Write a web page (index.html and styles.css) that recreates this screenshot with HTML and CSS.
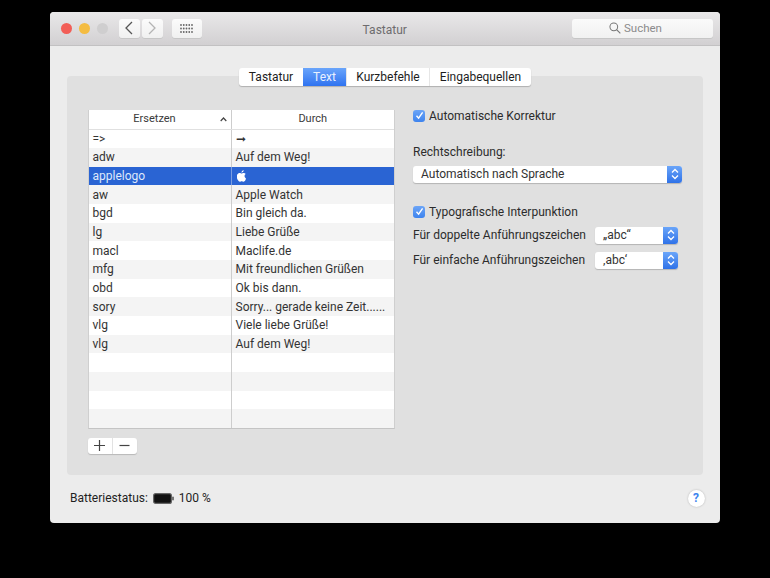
FILE: index.html
```html
<!DOCTYPE html>
<html lang="de">
<head>
<meta charset="utf-8">
<title>Tastatur</title>
<link rel="stylesheet" href="styles.css">
</head>
<body>
<div class="window">
  <header class="titlebar">
    <div class="lights">
      <span class="light red"></span><span class="light yellow"></span><span class="light grey"></span>
    </div>
    <div class="navgroup">
      <button class="tb-btn nav"><svg width="10" height="16" viewBox="0 0 10 16"><path d="M8 2 2 8l6 6" fill="none" stroke="#555" stroke-width="1.3"/></svg></button>
      <button class="tb-btn nav"><svg width="10" height="16" viewBox="0 0 10 16"><path d="M2 2l6 6-6 6" fill="none" stroke="#b4b4b4" stroke-width="1.3"/></svg></button>
    </div>
    <button class="tb-btn grid-btn"><svg width="13" height="9" viewBox="0 0 13 9" fill="#666"><circle cx="1" cy="1" r=".9"/><circle cx="3.75" cy="1" r=".9"/><circle cx="6.5" cy="1" r=".9"/><circle cx="9.25" cy="1" r=".9"/><circle cx="12" cy="1" r=".9"/><circle cx="1" cy="4.5" r=".9"/><circle cx="3.75" cy="4.5" r=".9"/><circle cx="6.5" cy="4.5" r=".9"/><circle cx="9.25" cy="4.5" r=".9"/><circle cx="12" cy="4.5" r=".9"/><circle cx="1" cy="8" r=".9"/><circle cx="3.75" cy="8" r=".9"/><circle cx="6.5" cy="8" r=".9"/><circle cx="9.25" cy="8" r=".9"/><circle cx="12" cy="8" r=".9"/></svg></button>
    <div class="title">Tastatur</div>
    <div class="search"><svg width="12" height="12" viewBox="0 0 13 13"><circle cx="5.2" cy="5.2" r="4.2" fill="none" stroke="#777" stroke-width="1.1"/><path d="M8.2 8.2 12.3 12.3" stroke="#777" stroke-width="1.3"/></svg><span>Suchen</span></div>
  </header>
  <main class="content">
    <section class="panel">
      <nav class="tabs">
        <span class="tab t1">Tastatur</span><span class="tab active t2">Text</span><span class="tab t3">Kurzbefehle</span><span class="tab t4">Eingabequellen</span>
      </nav>
      <div class="panel-body">
        <div class="left">
          <div class="table">
            <div class="thead">
              <div class="th c1"><span class="th-text">Ersetzen</span><svg class="sort" width="7" height="5" viewBox="0 0 7 5"><path d="M.7 4 3.5 1l2.8 3" fill="none" stroke="#444" stroke-width="1.2"/></svg></div>
              <div class="th c2">Durch</div>
            </div>
            <div class="tbody">
              <div class="row"><div class="c1">=&gt;</div><div class="c2">➞</div></div>
              <div class="row alt"><div class="c1">adw</div><div class="c2">Auf dem Weg!</div></div>
              <div class="row sel"><div class="c1">applelogo</div><div class="c2"><svg class="apple" width="10" height="12" viewBox="0 0 170 200"><path fill="#fff" d="M150 156c-3 7-6 13-10 19-5 8-10 13-13 16-5 5-11 7-17 7-4 0-9-1-15-4-6-2-11-4-16-4s-11 1-16 4c-6 3-11 4-14 4-7 0-13-2-18-7-4-3-9-9-14-17-6-9-11-19-15-30-4-13-6-25-6-36 0-13 3-25 9-34 4-8 10-14 17-18s15-6 23-6c5 0 11 1 18 4 7 2 12 4 14 4s7-2 16-5c8-3 15-4 21-3 15 1 27 7 34 18-13 8-20 20-20 34 0 11 4 21 12 28 4 3 8 6 12 8-1 3-2 6-3 8zM114 4c0 9-3 17-10 25-8 9-17 14-28 14 0-1 0-2 0-4 0-8 4-17 10-24 3-4 7-7 12-9 5-3 10-4 14-5 1 1 2 2 2 3z"/></svg></div></div>
              <div class="row alt"><div class="c1">aw</div><div class="c2">Apple Watch</div></div>
              <div class="row"><div class="c1">bgd</div><div class="c2">Bin gleich da.</div></div>
              <div class="row alt"><div class="c1">lg</div><div class="c2">Liebe Grüße</div></div>
              <div class="row"><div class="c1">macl</div><div class="c2">Maclife.de</div></div>
              <div class="row alt"><div class="c1">mfg</div><div class="c2">Mit freundlichen Grüßen</div></div>
              <div class="row"><div class="c1">obd</div><div class="c2">Ok bis dann.</div></div>
              <div class="row alt"><div class="c1">sory</div><div class="c2">Sorry... gerade keine Zeit......</div></div>
              <div class="row"><div class="c1">vlg</div><div class="c2">Viele liebe Grüße!</div></div>
              <div class="row alt"><div class="c1">vlg</div><div class="c2">Auf dem Weg!</div></div>
              <div class="row"><div class="c1"></div><div class="c2"></div></div>
              <div class="row alt"><div class="c1"></div><div class="c2"></div></div>
              <div class="row"><div class="c1"></div><div class="c2"></div></div>
              <div class="row alt"><div class="c1"></div><div class="c2"></div></div>
            </div>
          </div>
          <div class="addremove">
            <button class="ar"><svg width="11" height="11" viewBox="0 0 11 11"><path d="M5.5 0v11M0 5.5h11" stroke="#444" stroke-width="1.2"/></svg></button>
            <button class="ar"><svg width="11" height="11" viewBox="0 0 11 11"><path d="M.5 5.5h10" stroke="#444" stroke-width="1.2"/></svg></button>
          </div>
        </div>
        <div class="right">
          <label class="check first"><span class="box"><svg width="9" height="9" viewBox="0 0 9 9"><path d="M1.5 4.8 3.6 7.2 7.6 1.4" fill="none" stroke="#fff" stroke-width="1.4"/></svg></span>Automatische Korrektur</label>
          <div class="lbl">Rechtschreibung:</div>
          <div class="select wide"><span>Automatisch nach Sprache</span><span class="stepper"><svg width="8" height="12" viewBox="0 0 8 12"><path d="M1 4.5 4 1.5l3 3M1 7.5l3 3 3-3" fill="none" stroke="#fff" stroke-width="1.3"/></svg></span></div>
          <label class="check second"><span class="box"><svg width="9" height="9" viewBox="0 0 9 9"><path d="M1.5 4.8 3.6 7.2 7.6 1.4" fill="none" stroke="#fff" stroke-width="1.4"/></svg></span>Typografische Interpunktion</label>
          <div class="quote q1"><span class="q-label">Für doppelte Anführungszeichen</span><div class="select small"><span>„abc“</span><span class="stepper"><svg width="8" height="12" viewBox="0 0 8 12"><path d="M1 4.5 4 1.5l3 3M1 7.5l3 3 3-3" fill="none" stroke="#fff" stroke-width="1.3"/></svg></span></div></div>
          <div class="quote q2"><span class="q-label">Für einfache Anführungszeichen</span><div class="select small"><span>‚abc‘</span><span class="stepper"><svg width="8" height="12" viewBox="0 0 8 12"><path d="M1 4.5 4 1.5l3 3M1 7.5l3 3 3-3" fill="none" stroke="#fff" stroke-width="1.3"/></svg></span></div></div>
        </div>
      </div>
    </section>
    <footer class="status">
      <span class="status-label">Batteriestatus:</span>
      <svg class="battery" width="21" height="11" viewBox="0 0 21 11"><rect x=".6" y=".6" width="17.8" height="9.8" rx="2" fill="#111" stroke="#666" stroke-width="1.2"/><rect x="19.3" y="3.7" width="1.4" height="3.6" fill="#444"/></svg>
      <span>100 %</span>
      <span class="help">?</span>
    </footer>
  </main>
</div>
</body>
</html>
```
FILE: styles.css
```css
* { box-sizing: border-box; }
html, body { margin: 0; height: 100%; background: #000; overflow: hidden; }
body { padding: 12px 0 0 49.5px; font-family: Roboto, "Liberation Sans", sans-serif; font-size: 12px; color: #2a2a2a; }
button { font: inherit; padding: 0; border: 0; }

.window { width: 670.5px; height: 511px; background: #ececec; border-radius: 4px; overflow: hidden; display: flex; flex-direction: column; }

.titlebar { height: 33.5px; flex: none; display: flex; align-items: center; position: relative; background: linear-gradient(#e9e8e9, #d2d0d2); border-bottom: 1px solid #c2c1c2; }
.lights { display: flex; gap: 7px; margin-left: 11px; }
.light { width: 11px; height: 11px; border-radius: 50%; }
.red { background: #f25e57; }
.yellow { background: #f4bc42; }
.grey { background: #cfcecf; }
.navgroup { display: flex; gap: 2px; margin-left: 11px; }
.tb-btn { height: 19px; background: linear-gradient(#fbfbfb, #f0f0f0); border-radius: 3px; box-shadow: 0 1px 0 #c6c6c6; display: flex; align-items: center; justify-content: center; }
.nav { width: 21px; }
.grid-btn { width: 30px; margin-left: 9px; }
.title { position: absolute; left: 0; right: 0; text-align: center; color: #6e6c6e; font-size: 12px; pointer-events: none; padding-top: 3px; }
.search { margin-left: auto; margin-right: 7px; width: 141px; height: 19px; background: linear-gradient(#fafafa, #f1f1f1); border-radius: 3px; box-shadow: 0 1px 0 #c6c6c6; display: flex; align-items: center; justify-content: center; gap: 3px; padding-right: 14px; color: #8b8b8b; font-size: 11.5px; }

.content { flex: 1; padding: 30.5px 17.5px 0; display: flex; flex-direction: column; }
.panel { height: 399px; flex: none; background: #e0e0e0; border-radius: 4px; position: relative; padding: 33.5px 20.5px 0; }
.tabs { position: absolute; top: -8.5px; left: 172px; height: 18px; display: flex; background: #fff; border-radius: 3px; box-shadow: 0 1px 1px #b0b0b0; color: #1d1d1d; font-size: 12px; }
.tab { display: flex; align-items: center; justify-content: center; border-left: 1px solid #e6e6e6; }
.tab:first-child { border-left: 0; border-radius: 3px 0 0 3px; }
.t1 { width: 64px; }
.t2 { width: 43px; }
.t3 { width: 83px; }
.t4 { width: 102px; }
.active { background: linear-gradient(#6aa5fb, #2f73f0); color: #e8f1ff; border-left: 0; }

.panel-body { display: flex; }
.left { width: 325.5px; flex: none; }
.table { width: 307.5px; height: 319.5px; background: #fff; border-bottom: 1px solid #c4c4c4; border-left: 1px solid #cfcfcf; border-right: 1px solid #cfcfcf; display: flex; flex-direction: column; }
.thead { height: 20px; flex: none; display: flex; border-bottom: 1px solid #e0e0e0; font-size: 11px; color: #3a3a3a; padding-bottom: 0; }
.c1 { width: 142px; flex: none; padding-left: 4px; white-space: nowrap; overflow: hidden; }
.c2 { flex: 1; padding-left: 4px; white-space: nowrap; overflow: hidden; border-left: 1px solid #cdcdcd; }
.th { display: flex; align-items: center; justify-content: center; position: relative; padding: 0 0 1px; }
.th-text { margin-right: 10px; }
.sort { position: absolute; right: 4px; top: 7px; }
.tbody { flex: 1; display: flex; flex-direction: column; }
.row { flex: 1; display: flex; align-items: center; color: #333; font-size: 12px; }
.row > div { height: 100%; display: flex; align-items: center; }
.alt { background: #f4f4f4; }
.sel { background: #2a64d3; color: #dfe9fb; }
.sel .c2 { border-left-color: #7b9de0; }
.apple { margin-left: 1px; }
.addremove { display: inline-flex; margin-top: 8.5px; background: #fff; border-radius: 3px; box-shadow: 0 1px 1px #b8b8b8; height: 16px; }
.ar { width: 24.5px; background: transparent; display: flex; align-items: center; justify-content: center; }
.ar + .ar { border-left: 1px solid #e2e2e2; }

.right { flex: 1; color: #2c2c2c; font-size: 12px; }
.check { display: flex; align-items: center; gap: 4px; height: 14px; }
.first { margin-top: -1px; }
.box { width: 12px; height: 12px; border-radius: 3px; background: linear-gradient(#6ca5f7, #3d83ee); display: flex; align-items: center; justify-content: center; }
.lbl { margin-top: 22.5px; height: 15px; line-height: 15px; }
.select { background: #fff; border-radius: 3px; box-shadow: 0 1px 1px #b4b4b4; display: flex; align-items: center; justify-content: space-between; height: 17px; color: #333; }
.wide { width: 269px; margin-top: 5.5px; padding-left: 8px; }
.small { width: 83px; padding-left: 8px; }
.stepper { width: 15px; height: 100%; border-radius: 0 3px 3px 0; background: linear-gradient(#6aa5f9, #2f72e8); display: flex; align-items: center; justify-content: center; }
.second { margin-top: 22px; }
.quote { display: flex; justify-content: space-between; align-items: center; width: 265px; height: 17px; }
.q-label { white-space: nowrap; }
.q1 { margin-top: 8px; }
.q2 { margin-top: 8px; }

.status { flex: 1; display: flex; align-items: center; padding: 0 0 2px 3px; margin-right: -2px; gap: 5px; color: #1f1f1f; }
.help { margin-left: auto; width: 17px; height: 17px; border-radius: 50%; background: #fff; box-shadow: 0 0 2px #b0b0b0; color: #3d83ee; font-weight: 700; font-size: 12px; display: flex; align-items: center; justify-content: center; }
```
